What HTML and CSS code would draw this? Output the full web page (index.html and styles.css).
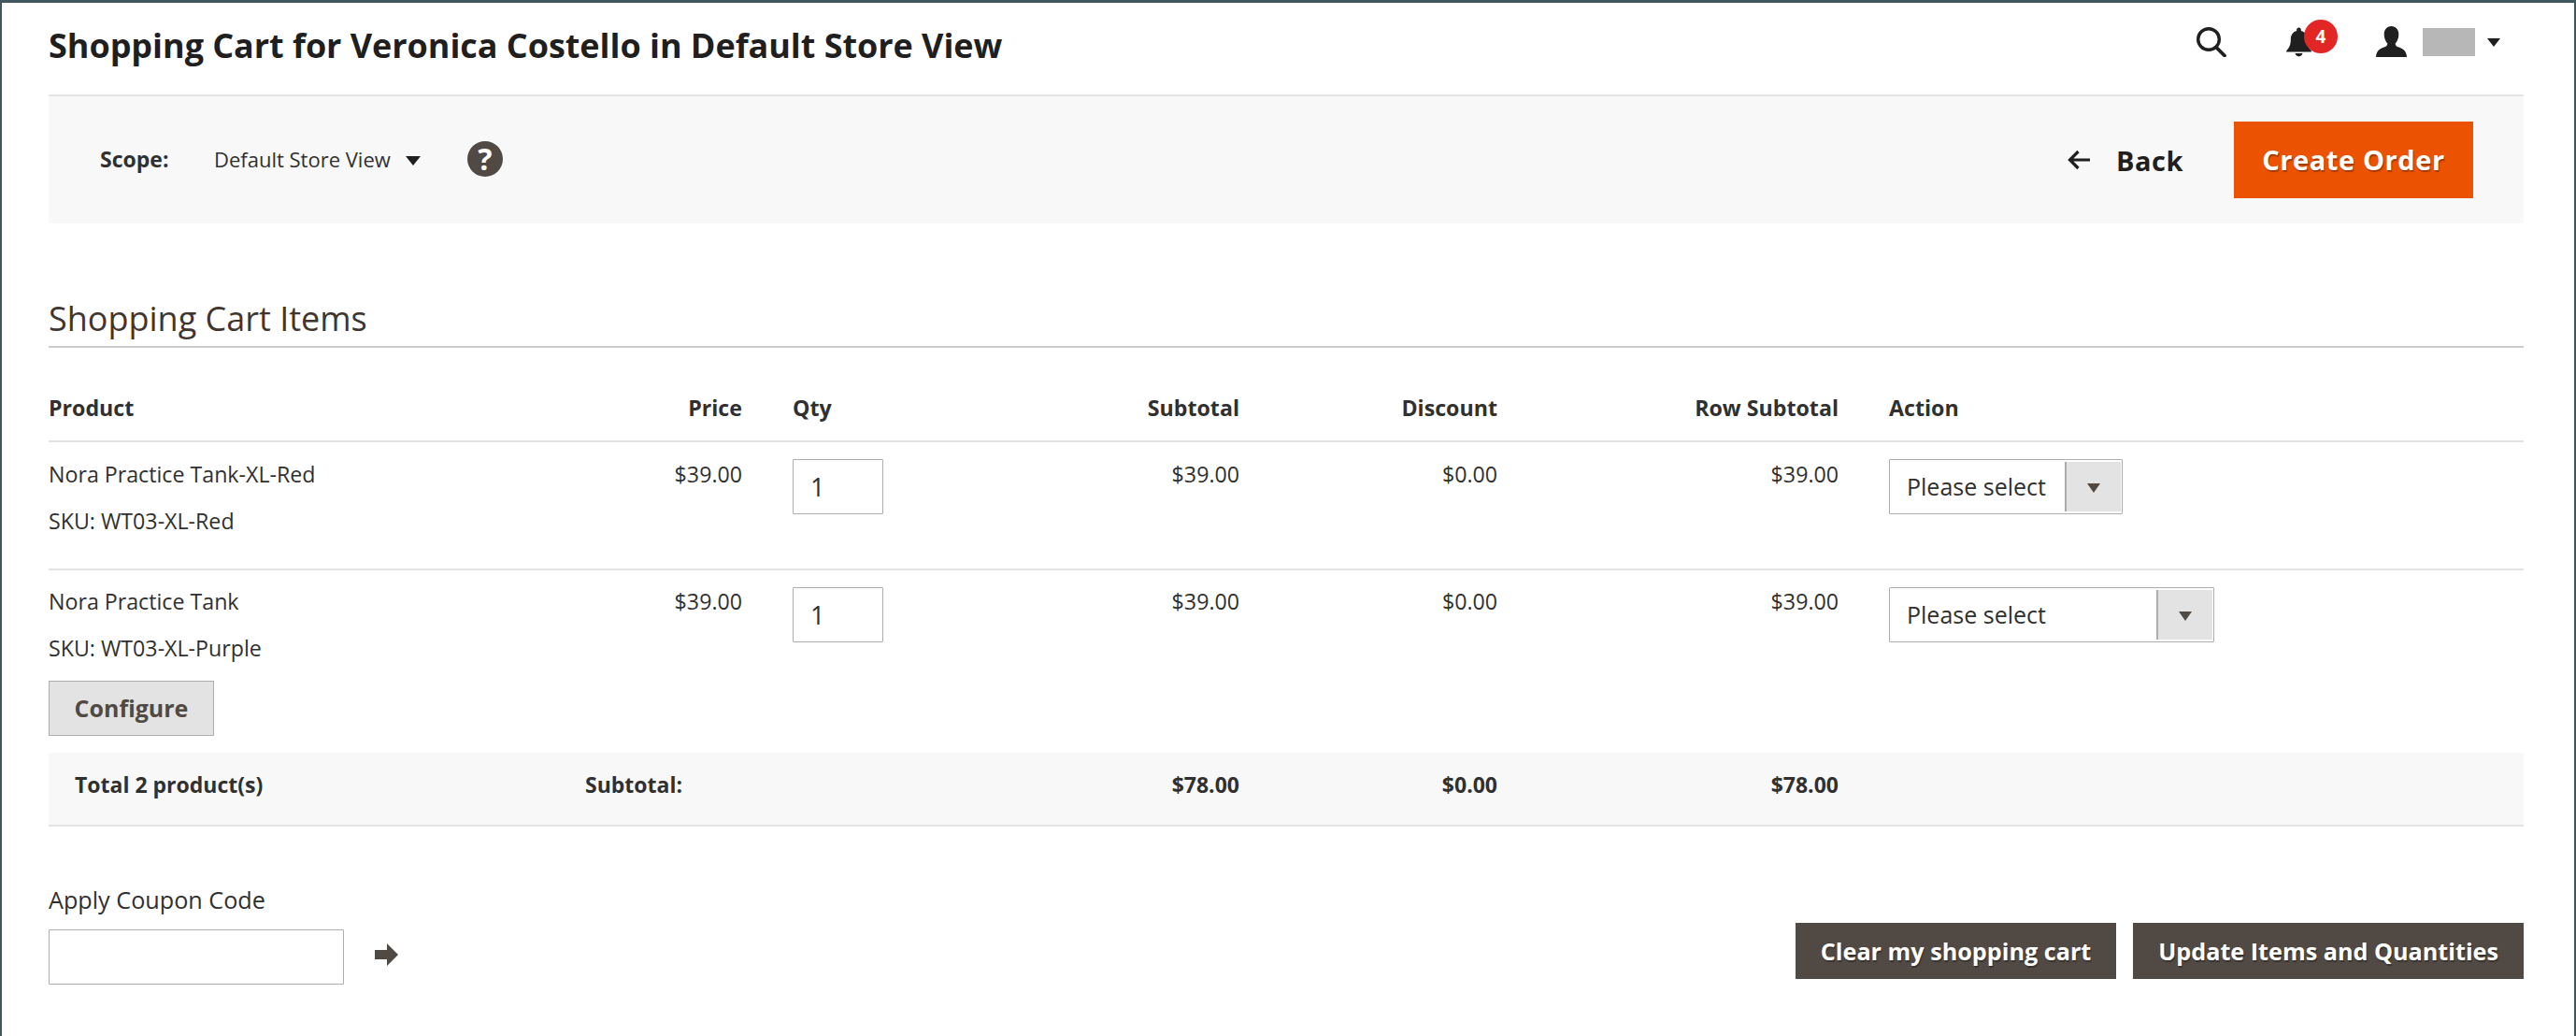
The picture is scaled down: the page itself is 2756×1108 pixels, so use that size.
FILE: index.html
```html
<!DOCTYPE html>
<html lang="en">
<head>
<meta charset="utf-8">
<title>Shopping Cart</title>
<link rel="stylesheet" href="styles.css">
</head>
<body>
<div class="page">
  <header class="topbar">
    <h1 class="title">Shopping Cart for Veronica Costello in Default Store View</h1>
    <div class="tools">
      <svg class="ico-search" viewBox="0 0 32 32"><circle cx="13" cy="13" r="11.300" fill="none" stroke="#1f1f1f" stroke-width="3.400"/><path d="M21 21.500 L30 30.500" stroke="#1f1f1f" stroke-width="3.800" stroke-linecap="round"/></svg>
      <div class="bell">
        <svg class="ico-bell" viewBox="0 0 28 32"><path d="M14 0c1.500 0 2.400 1 2.400 2.500v1C21 4.800 23 8.500 23 13c0 6 1.500 9.500 4.800 12.500V27H.2v-1.500C3.500 22.500 5 19 5 13c0-4.500 2-8.200 6.600-9.500v-1C11.600 1 12.500 0 14 0zM9.800 28.500h8.400c-.5 2-2.200 3.500-4.200 3.500s-3.700-1.500-4.200-3.500z" fill="#1f1f1f"/></svg>
        <span class="badge">4</span>
      </div>
      <svg class="ico-user" viewBox="0 0 33 33"><path d="M16.500 0c4.700 0 7.800 3.600 7.800 8.700 0 4-1.600 7.600-3.600 9.800 0 2 .9 3 3 3.800 4 1.500 8.800 3 9.300 10.700H0c.5-7.700 5.300-9.200 9.300-10.700 2.100-.8 3-1.800 3-3.800-2-2.200-3.600-5.800-3.600-9.800C8.700 3.600 11.800 0 16.500 0z" fill="#1f1f1f"/></svg>
      <span class="user-mask"></span>
      <span class="user-caret"></span>
    </div>
  </header>

  <section class="toolbar">
    <div class="scope">
      <span class="scope-label">Scope:</span>
      <span class="scope-value">Default Store View</span>
      <span class="scope-caret"></span>
      <span class="help">?</span>
    </div>
    <div class="actions">
      <a class="back">
        <svg class="ico-back" viewBox="0 0 25 22"><path d="M24 11H3M11.500 2 2.500 11l9 9" fill="none" stroke="#1f1f1f" stroke-width="3.200"/></svg>
        <span>Back</span>
      </a>
      <button class="btn-primary">Create Order</button>
    </div>
  </section>

  <h2 class="section-title">Shopping Cart Items</h2>

  <table class="cart">
    <colgroup>
      <col class="c-product"><col class="c-price"><col class="c-qty"><col class="c-sub"><col class="c-disc"><col class="c-row"><col class="c-action">
    </colgroup>
    <thead>
      <tr>
        <th class="first">Product</th><th class="num">Price</th><th>Qty</th><th class="num">Subtotal</th><th class="num">Discount</th><th class="num">Row Subtotal</th><th>Action</th>
      </tr>
    </thead>
    <tbody>
      <tr class="row-a">
        <td class="first"><div>Nora Practice Tank-XL-Red</div><div class="sku">SKU: WT03-XL-Red</div></td>
        <td class="num">$39.00</td>
        <td><input class="qty" type="text" value="1"></td>
        <td class="num">$39.00</td><td class="num">$0.00</td><td class="num">$39.00</td>
        <td><div class="select select-short"><span class="select-text">Please select</span><span class="select-arrow"><i></i></span></div></td>
      </tr>
      <tr class="row-b">
        <td class="first"><div>Nora Practice Tank</div><div class="sku">SKU: WT03-XL-Purple</div><button class="btn-config">Configure</button></td>
        <td class="num">$39.00</td>
        <td><input class="qty" type="text" value="1"></td>
        <td class="num">$39.00</td><td class="num">$0.00</td><td class="num">$39.00</td>
        <td><div class="select select-long"><span class="select-text">Please select</span><span class="select-arrow"><i></i></span></div></td>
      </tr>
    </tbody>
    <tfoot>
      <tr>
        <td class="total-label">Total 2 product(s)</td>
        <td class="total-label" colspan="2">Subtotal:</td>
        <td class="num">$78.00</td><td class="num">$0.00</td><td class="num">$78.00</td><td></td>
      </tr>
    </tfoot>
  </table>

  <section class="bottom">
    <div class="coupon">
      <label class="coupon-label">Apply Coupon Code</label>
      <div class="coupon-row">
        <input class="coupon-input" type="text">
        <svg class="ico-go" viewBox="0 0 25 24"><path d="M0 7h13V0l12 12-12 12v-7H0z" fill="#514943"/></svg>
      </div>
    </div>
    <div class="bottom-btns">
      <button class="btn-dark">Clear my shopping cart</button>
      <button class="btn-dark">Update Items and Quantities</button>
    </div>
  </section>
</div>
</body>
</html>
```
FILE: styles.css
```css
* { box-sizing: border-box; }
html, body { margin: 0; padding: 0; background: #fff; }
body { font-family: "Open Sans", sans-serif; color: #303030; font-size: 24px; }
.page {
  height: 1108px;
  overflow: hidden;
  border-top: 3px solid #41575f;
  border-left: 2px solid #41575f;
  border-right: 2px solid #41575f;
  padding: 0 54px 0 50px;
}
.topbar { height: 98px; display: flex; align-items: center; justify-content: space-between; }
.title { margin: 0; font-size: 36px; font-weight: 700; color: #1f1f1f; line-height: 48px; letter-spacing: -.05px; position: relative; top: -3px; }
.tools { display: flex; align-items: center; height: 70px; margin-top: -14px; padding-right: 25px; }
.ico-search { width: 32px; height: 32px; margin-right: 64px; }
.bell { position: relative; width: 26px; height: 32px; margin-right: 70px; }
.ico-bell { width: 27px; height: 32px; display: block; }
.badge { position: absolute; left: 19px; top: -8px; width: 36px; height: 36px; border-radius: 50%; background: #e22626; color: #fff; font-size: 19px; font-weight: 700; line-height: 36px; text-align: center; }
.ico-user { width: 33px; height: 33px; margin-right: 17px; margin-top: -2px; }
.user-mask { width: 56px; height: 30px; background: #b7b7b7; margin-right: 13px; }
.user-caret { width: 0; height: 0; border-left: 7px solid transparent; border-right: 7px solid transparent; border-top: 9px solid #1f1f1f; }

.toolbar { height: 138px; background: #f8f8f8; border-top: 2px solid #e3e3e3; display: flex; align-items: center; justify-content: space-between; padding: 0 54px 0 55px; }
.scope { display: flex; align-items: center; }
.scope-label { font-weight: 700; font-size: 23px; width: 122px; margin-top: -2px; }
.scope-value { font-size: 22px; margin-top: -2px; }
.scope-caret { width: 0; height: 0; border-left: 8px solid transparent; border-right: 8px solid transparent; border-top: 10px solid #1f1f1f; margin: 2px 50px 0 16px; }
.help { width: 38px; height: 38px; border-radius: 50%; background: #514943; color: #fff; font-weight: 700; font-size: 32px; line-height: 38px; text-align: center; margin-top: -2px; }
.actions { display: flex; align-items: center; }
.back { display: flex; align-items: center; font-weight: 700; font-size: 29px; color: #1f1f1f; margin-right: 54px; letter-spacing: .5px; }
.ico-back { width: 25px; height: 22px; margin-right: 27px; }
.btn-primary { width: 256px; height: 82px; border: 0; background: #eb5202; color: #fff; font: 700 29px "Open Sans", sans-serif; letter-spacing: .6px; text-shadow: 1px 2px 1px rgba(0,0,0,.3); padding: 0 0 2px; }

.section-title { margin: 83px 0 0; height: 50px; line-height: 38px; font-size: 36px; font-weight: 400; color: #41362f; border-bottom: 2px solid #ccc; }

.cart { width: 100%; border-collapse: collapse; table-layout: fixed; }
.c-product { width: 546px; }
.c-price { width: 223px; }
.c-qty { width: 180px; }
.c-sub { width: 352px; }
.c-disc { width: 276px; }
.c-row { width: 365px; }
th { height: 100px; font-weight: 700; font-size: 23.2px; text-align: left; padding: 28px 27px 0; border-bottom: 2px solid #e3e3e3; }
td { padding: 0 27px; font-size: 23.2px; vertical-align: top; }
.first { padding-left: 0; }
.cart .num { text-align: right; }
tbody td { line-height: 32px; padding-top: 18px; }
.row-a td { height: 137px; border-bottom: 2px solid #e3e3e3; }
.row-b td { height: 196px; padding-top: 17px; }
.row-b .qty, .row-b .select { margin-top: 1px; }
.sku { margin-top: 18px; }
.qty { display: block; width: 97px; height: 59px; border: 1px solid #adadad; border-radius: 1px; padding: 0 18px; font: 400 27px "Open Sans", sans-serif; color: #303030; }
.select { display: flex; height: 59px; border: 1px solid #adadad; border-radius: 1px; background: #fff; padding: 2px 1px 2px 0; }
.select-short { width: 250px; }
.select-long { width: 348px; }
.select-text { flex: 1; padding-left: 18px; line-height: 52px; font-size: 25px; }
.select-arrow { width: 60px; background: #e3e3e3; border-left: 2px solid #adadad; display: flex; align-items: center; justify-content: center; }
.select-arrow i { width: 0; height: 0; border-left: 7px solid transparent; border-right: 7px solid transparent; border-top: 10px solid #514943; margin-top: 2px; }
.btn-config { display: block; margin-top: 19px; width: 177px; height: 59px; background: #e3e3e3; border: 1px solid #adadad; color: #514943; font: 700 25px "Open Sans", sans-serif; padding: 0 0 2px; }

tfoot td { height: 78px; font-size: 23px; background: #f8f8f8; border-bottom: 2px solid #e3e3e3; font-weight: 700; vertical-align: middle; padding-bottom: 10px; }
.total-label { padding-left: 28px; }

.bottom { display: flex; justify-content: space-between; margin-top: 59px; }
.coupon-label { display: block; font-size: 25.2px; line-height: 38px; color: #303030; }
.coupon-row { display: flex; align-items: center; margin-top: 13px; }
.coupon-input { width: 316px; height: 59px; border: 1px solid #adadad; border-radius: 1px; }
.ico-go { width: 25px; height: 24px; margin-left: 33px; margin-top: -5px; }
.bottom-btns { display: flex; gap: 18px; margin-top: 44px; align-self: flex-start; }
.btn-dark { height: 60px; border: 0; background: #514943; color: #fff; font: 700 25.2px "Open Sans", sans-serif; padding: 0 27px; text-shadow: 1px 2px 1px rgba(0,0,0,.3); }
```
